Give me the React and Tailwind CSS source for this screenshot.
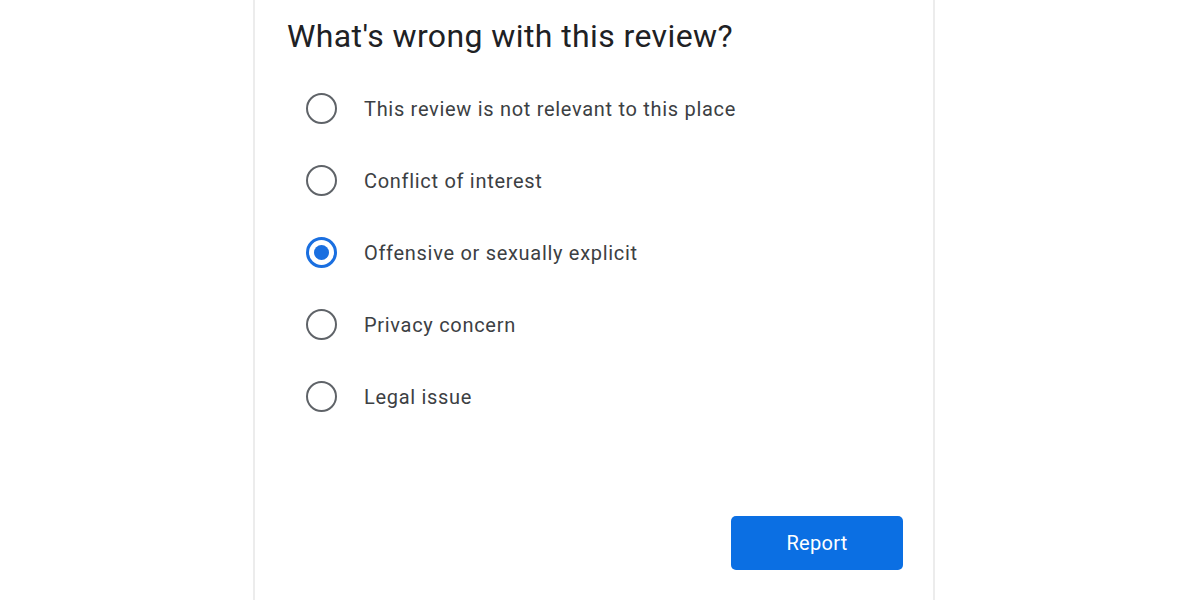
const options = [
  'This review is not relevant to this place',
  'Conflict of interest',
  'Offensive or sexually explicit',
  'Privacy concern',
  'Legal issue',
]

function Radio({ checked }) {
  return checked ? (
    <span className="w-[31px] h-[31px] rounded-full border-[3px] border-[#1a6fe0] flex items-center justify-center shrink-0">
      <span className="w-[15px] h-[15px] rounded-full bg-[#1a6fe0]"></span>
    </span>
  ) : (
    <span className="w-[31px] h-[31px] rounded-full border-[2.5px] border-[#5f6368] shrink-0"></span>
  )
}

export default function App() {
  return (
    <div className="w-[1200px] h-[600px] bg-white overflow-hidden font-['Roboto',sans-serif]">
      <div className="ml-[253px] w-[682px] h-[600px] border-x-2 border-[#ececec] flex flex-col">
        <h1 className="ml-[32px] mt-[16px] text-[32px] leading-[40px] text-[#202124] tracking-[0.4px]">
          What's wrong with this review?
        </h1>
        <div className="mt-[37px] flex flex-col gap-[41px]">
          {options.map((o, i) => (
            <label key={o} className="flex items-center h-[31px] ml-[51px]">
              <Radio checked={i === 2} />
              <span className="ml-[27px] text-[20px] text-[#3c4043] tracking-[0.7px]">{o}</span>
            </label>
          ))}
        </div>
        <div className="flex justify-end mt-[104px] mr-[30px]">
          <button className="w-[172px] h-[54px] rounded-[5px] bg-[#0b6fe3] text-white text-[20px] tracking-[0.3px]">
            Report
          </button>
        </div>
      </div>
    </div>
  )
}
